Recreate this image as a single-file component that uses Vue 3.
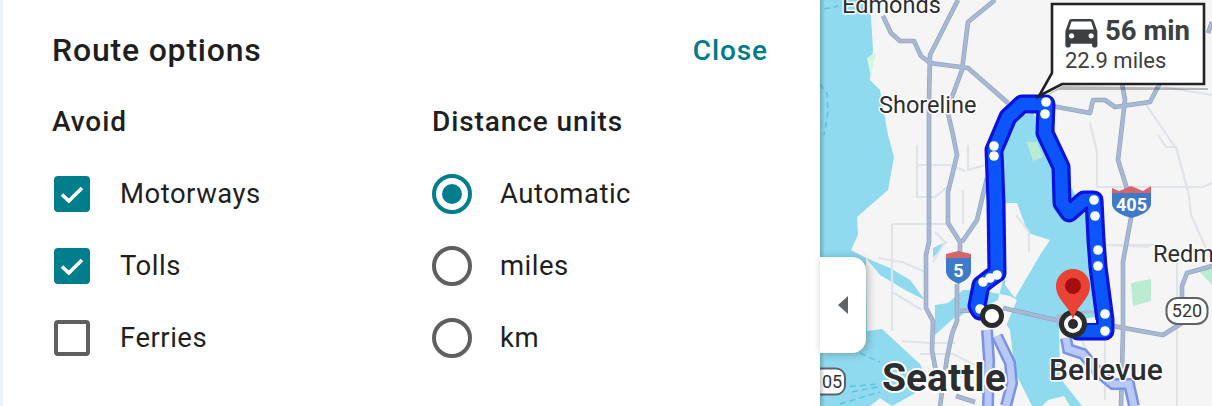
<script setup>
const avoid = [
  { label: 'Motorways', on: true },
  { label: 'Tolls', on: true },
  { label: 'Ferries', on: false },
]
const units = [
  { label: 'Automatic', on: true },
  { label: 'miles', on: false },
  { label: 'km', on: false },
]
const minor = [
  'M97 145V197H115L130 185', 'M97 165H130L145 171', 'M148 145V170L165 165', 'M143 190V224', 'M72 224H128',
  'M72 224V331', 'M58 258L82 262L105 272', 'M72 292L102 310', 'M82 341L110 343H135', 'M100 354H133L160 368',
  'M140 376L185 372', 'M115 232L125 242L113 262',
  'M270 123L277 152V187H383L392 183', 'M338 135L346 147H356L369 195L371 215L386 248', 'M286 245L329 247',
  'M196 215L209 232V252', 'M357 263V406', 'M287 245H343', 'M343 87L392 95', 'M325 103L357 150',
  'M285 340V400', 'M262 340L266 350',
]
const major = [
  'M63 16L71 33L80 41H94L101 56L110 63L148 68L188 103',
  'M138 0L110 55L109 100V242L106 255V308L113 321L112 350L116 372',
  'M175 0L148 22L142 70L132 97L128 113L133 135L137 155L128 192V223L140 242V252',
  'M167 178L157 220L142 242',
  'M137 284V321L132 334L127 358L120 406',
  'M140 311L160 310M183 308L240 321L293 326L343 335L362 323V286L367 273L392 266',
  'M302 83L305 100L298 160L308 192L311 218L303 262V331L301 406',
  'M226 105L270 113L273 100H285L295 107L330 102L340 83',
  'M388 33L392 22',
  'M136 396L155 402',
]
const dots = [
  [226, 102], [225, 114], [174, 146], [174, 156], [274, 200], [275, 216], [278, 250], [278, 266],
  [285, 314], [285, 331], [163, 282], [170, 278], [177, 275], [160, 309],
]
const routePath = 'M160 311L157 306L161 285L170 278L177 273L176 203L174 150L188 117L202 104H226L225 133L241 167L242 203L249 213L264 200H274L276 240L278 267L285 320V331H258'
const altPaths = ['M167 330L169 360L168 406', 'M177 336L190 363L192 383L186 406', 'M246 338L248 349L263 354L278 372L293 384H309L314 406']
const car = 'M18.92 6.01C18.72 5.42 18.16 5 17.5 5h-11c-.66 0-1.21.42-1.42 1.01L3 12v8c0 .55.45 1 1 1h1c.55 0 1-.45 1-1v-1h12v1c0 .55.45 1 1 1h1c.55 0 1-.45 1-1v-8l-2.08-5.99zM6.5 16c-.83 0-1.5-.67-1.5-1.5S5.67 13 6.5 13s1.5.67 1.5 1.5S7.33 16 6.5 16zm11 0c-.83 0-1.5-.67-1.5-1.5s.67-1.5 1.5-1.5 1.5.67 1.5 1.5-.67 1.5-1.5 1.5zM5 11l1.5-4.5h11L19 11H5z'
</script>

<template>
  <div class="app">
    <section class="panel">
      <header class="head">
        <h1>Route options</h1>
        <span class="close">Close</span>
      </header>
      <div class="cols">
        <div class="col">
          <h2>Avoid</h2>
          <div v-for="o in avoid" :key="o.label" class="row">
            <span class="check" :class="{ on: o.on }">
              <svg v-if="o.on" width="26" height="26" viewBox="0 0 26 26"><path d="M3 13.500L9.800 20L23 7" fill="none" stroke="#fff" stroke-width="3.600" /></svg>
            </span>
            <span class="txt">{{ o.label }}</span>
          </div>
        </div>
        <div class="col">
          <h2>Distance units</h2>
          <div v-for="o in units" :key="o.label" class="row">
            <span class="radio" :class="{ on: o.on }"><i v-if="o.on"></i></span>
            <span class="txt">{{ o.label }}</span>
          </div>
        </div>
      </div>
    </section>
    <div class="map">
      <svg class="canvas" width="392" height="406" viewBox="0 0 392 406">
        <defs>
          <linearGradient id="edge" x1="0" x2="1" y1="0" y2="0">
            <stop offset="0" stop-color="#000" stop-opacity=".22" />
            <stop offset="1" stop-color="#000" stop-opacity="0" />
          </linearGradient>
        </defs>
        <rect width="392" height="406" fill="#f5f5f5" />
        <g fill="#8fdaee">
          <path d="M0 0H50L53 50L50 80L60 90L68 135L74 157L68 190L37 217L38 235L31 250L46 258L47 331L62 329L100 364L110 385L72 406L60 398L50 406H0Z" />
          <path d="M46 258L70 268L90 280L105 300L85 290L60 275Z" />
          <path d="M113 248L128 241L113 258Z" />
          <path d="M115 305L128 303L143 290H160L190 296L197 300L178 345L195 372L212 406H262L240 378L239 322L284 316L277 260L266 215L242 170L225 130L213 113L190 118L184 150L183 280L178 300L150 314L134 318L115 335Z" />
        </g>
        <path d="M185 203H197L208 233L230 240L220 255L195 298L185 285Z" fill="#f5f5f5" />
        <path d="M145 312L178 312L190 330L196 380L212 406H120L115 340Z" fill="#f5f5f5" />
        <path d="M228 400L244 396L250 406H222Z" fill="#f5f5f5" />
        <g fill="#b9ecd0">
          <path d="M207 142H217L223 157L213 161Z" />
          <path d="M311 283L331 279V301L313 306Z" />
          <path d="M376 268H392V285Z" />
        </g>
        <path d="M47 58L56 52L51 78Z" fill="#d3f8e2" />
        <g fill="none" stroke="#59c4de" stroke-width="1.5" stroke-dasharray="6 4">
          <path d="M4 9L18 6" />
          <path d="M0 84L7 94L8 112L4 135" />
          <path d="M40 353L60 362M0 389L60 384M32 392L62 386M20 404L60 392" />
        </g>
        <path v-for="d in minor" :key="d" :d="d" fill="none" stroke="#dfe3ea" stroke-width="2.2" />
        <g fill="none" stroke-linejoin="round">
          <path v-for="d in major" :key="d" :d="d" stroke="#8fa3c4" stroke-width="4.600" />
          <path v-for="d in major" :key="d + 'i'" :d="d" stroke="#a9b9d3" stroke-width="3.200" />
        </g>
        <g fill="none">
          <path v-for="d in altPaths" :key="d" :d="d" stroke="#7a92e2" stroke-width="12" />
          <path v-for="d in altPaths" :key="d + 'i'" :d="d" stroke="#b9caf9" stroke-width="7" />
        </g>
        <path d="M238 326V316L258 312H283" fill="none" stroke="#a9b9d3" stroke-width="3" />
        <g fill="none" stroke-linejoin="round" stroke-linecap="round">
          <path :d="routePath" stroke="#0a12dc" stroke-width="19" />
          <path :d="routePath" stroke="#0c55fb" stroke-width="12.500" />
        </g>
        <path d="M263 320H276V323H263Z" fill="#f5f5f5" />
        <circle v-for="p in dots" :key="p.join()" :cx="p[0]" :cy="p[1]" r="4.800" fill="#fff" />

        <g class="shield">
          <path d="M126 254L138 251L151 254V258H126Z" fill="#d9636a" />
          <path d="M126 258H151V271C151 277 145 281 138.500 284C132 281 126 277 126 271Z" fill="#3f7ac9" />
          <text x="138.500" y="277" text-anchor="middle" class="sh">5</text>
        </g>
        <g class="shield">
          <path d="M292 188L299 191L311 186L323 191L331 186V193H292Z" fill="#d9636a" />
          <path d="M292 193H331V204C331 211 320 216 311.500 218C303 216 292 211 292 204Z" fill="#3f7ac9" />
          <text x="311.500" y="211" text-anchor="middle" class="sh">405</text>
        </g>
        <rect x="346.500" y="298" width="41" height="26" rx="11" fill="#fff" stroke="#5f6368" stroke-width="2" />
        <text x="367" y="317" text-anchor="middle" class="rt">520</text>
        <rect x="-16" y="368.500" width="41" height="26" rx="9" fill="#fff" stroke="#5f6368" stroke-width="2" />
        <text x="2" y="388" class="rt">05</text>

        <text x="22" y="13" class="lb sm">Edmonds</text>
        <text x="59" y="113" class="lb sm">Shoreline</text>
        <text x="333" y="262" class="lb sm">Redm</text>
        <text x="62" y="391" class="lb big">Seattle</text>
        <text x="229" y="380" class="lb mid">Bellevue</text>

        <circle cx="172" cy="316" r="9.500" fill="#fff" stroke="#2b2b2b" stroke-width="5" />
        <circle cx="253" cy="324" r="14" fill="#2b2b2b" />
        <circle cx="253" cy="324" r="9" fill="#fff" />
        <circle cx="253" cy="324" r="5" fill="#2b2b2b" />
        <path d="M253 320C250 306 236 300 236 286A17 17 0 0 1 270 286C270 300 256 306 253 320Z" fill="#ea4335" />
        <circle cx="253" cy="286" r="8" fill="#a50e0e" />

        <path d="M219 100L238 90H388V88L242 86Z" fill="#000" opacity=".25" />
        <path d="M232 4H384V84H242L219 96L232 73Z" fill="#fff" stroke="#222" stroke-width="2.600" />
        <path :d="car" transform="translate(240 10) scale(1.78)" fill="#3c4043" />
        <text x="285" y="40" class="time">56 min</text>
        <text x="245" y="68" class="dist">22.9 miles</text>
        <rect width="5" height="406" fill="url(#edge)" />
      </svg>
      <button class="handle" aria-label="Collapse">
        <svg width="10" height="18" viewBox="0 0 10 18"><path d="M10 0V18L0 9Z" fill="#5f6368" /></svg>
      </button>
    </div>
  </div>
</template>

<style scoped>
.app {
  width: 1212px;
  height: 406px;
  display: flex;
  overflow: hidden;
  background: #fff;
  font-family: Roboto, "Liberation Sans", sans-serif;
  color: #1f1f1f;
}
.panel {
  width: 820px;
  box-sizing: border-box;
  border-left: 3px solid #eaf3fa;
  padding: 30px 52px 0 49px;
  flex: none;
}
.head {
  display: flex;
  justify-content: space-between;
  align-items: center;
  height: 40px;
}
h1 {
  margin: 0;
  font-size: 32px;
  font-weight: 500;
  letter-spacing: 0.8px;
}
.close {
  font-size: 28px;
  font-weight: 500;
  letter-spacing: 0.9px;
  color: #007b8a;
}
.cols {
  display: grid;
  grid-template-columns: 380px 1fr;
  margin-top: 33px;
}
h2 {
  margin: 0;
  font-size: 28px;
  line-height: 38px;
  font-weight: 500;
  letter-spacing: 0.9px;
}
.row {
  display: flex;
  align-items: center;
  height: 72px;
  font-size: 27.500px;
  letter-spacing: 0.5px;
}
.txt {
  margin-bottom: 2px;
}
.col h2 + .row {
  margin-top: 17px;
}
.check {
  width: 36px;
  height: 36px;
  margin: 0 30px 0 2px;
  box-sizing: border-box;
  border: 4px solid #5f5f5f;
  border-radius: 4px;
  display: flex;
  align-items: center;
  justify-content: center;
}
.check.on {
  background: #017e8c;
  border-color: #017e8c;
}
.radio {
  width: 40px;
  height: 40px;
  margin-right: 28px;
  box-sizing: border-box;
  border: 4px solid #5f5f5f;
  border-radius: 50%;
  display: flex;
  align-items: center;
  justify-content: center;
}
.radio.on {
  border-color: #017e8c;
}
.radio i {
  width: 20px;
  height: 20px;
  border-radius: 50%;
  background: #017e8c;
}
.map {
  position: relative;
  width: 392px;
  height: 406px;
  flex: none;
}
.canvas {
  display: block;
}
.handle {
  position: absolute;
  left: 0;
  top: 257px;
  width: 46px;
  height: 96px;
  padding: 0;
  border: 0;
  background: #fff;
  border-radius: 0 14px 14px 0;
  box-shadow: 2px 1px 8px rgba(0, 0, 0, 0.28);
  display: flex;
  align-items: center;
  justify-content: center;
}
.lb {
  font-family: Roboto, sans-serif;
  fill: #2b2d31;
  stroke: #fff;
  stroke-width: 3px;
  paint-order: stroke;
  stroke-linejoin: round;
}
.sm {
  font-size: 23.500px;
}
.big {
  font-size: 39px;
  font-weight: 700;
  stroke-width: 4px;
}
.mid {
  font-size: 30px;
  font-weight: 500;
}
.sh {
  font-family: Roboto, sans-serif;
  font-size: 18px;
  font-weight: 700;
  fill: #fff;
}
.rt {
  font-family: Roboto, sans-serif;
  font-size: 18px;
  fill: #333;
}
.time {
  font-family: Roboto, sans-serif;
  font-size: 27.500px;
  font-weight: 700;
  fill: #3c4043;
}
.dist {
  font-family: Roboto, sans-serif;
  font-size: 22px;
  fill: #3c4043;
}
</style>
